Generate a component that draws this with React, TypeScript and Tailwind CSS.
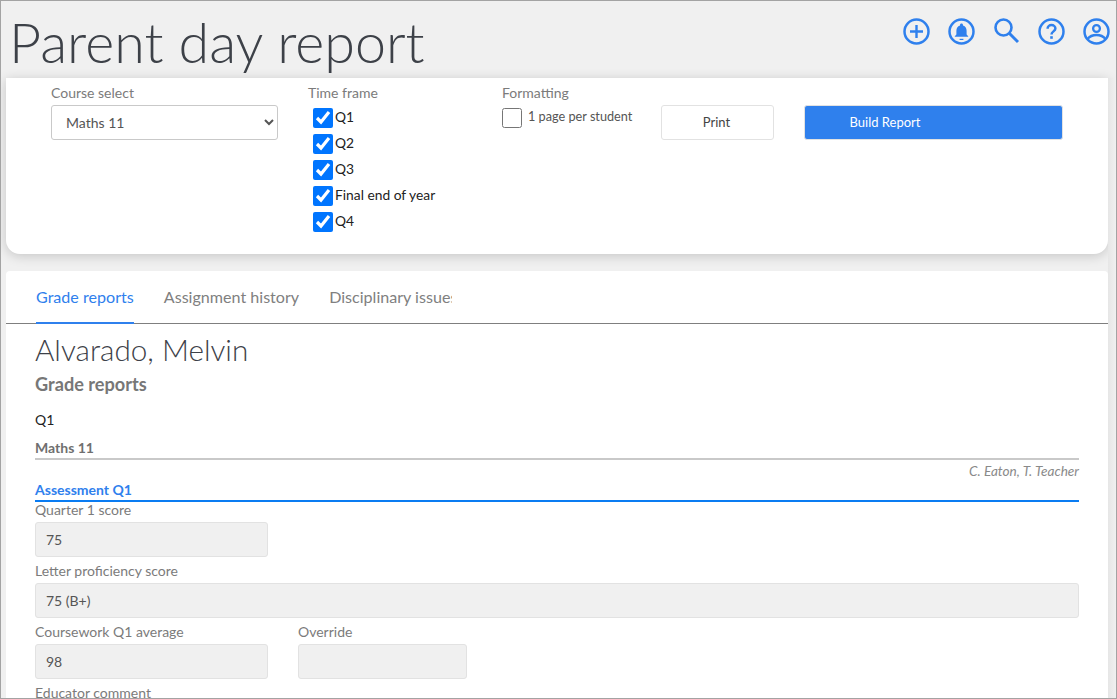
const quarters = ["Q1", "Q2", "Q3", "Final end of year", "Q4"];

function ReadonlyField({ label, value, className }: { label: string; value?: string; className: string }) {
  return (
    <div className={className}>
      <div className="h-[21px] text-[14px] leading-[17px] text-[#7b7b7b]">{label}</div>
      <div className="flex h-[35px] items-center rounded-[3px] border border-[#e2e2e2] bg-[#f0f0f0] pb-[1px] pl-[10px] text-[14px] text-[#555]">
        {value}
      </div>
    </div>
  );
}

function HeaderIcons() {
  return (
    <div className="absolute top-[17px] left-[902px] flex gap-[18px]">
      <svg width="27" height="27" viewBox="0 0 27 27" fill="none" stroke="#2f80ed" strokeWidth="2.5">
        <circle cx="13.5" cy="13.5" r="12" />
        <path d="M13.5 7v13M7 13.5h13" strokeWidth="2.4" />
      </svg>
      <svg width="27" height="27" viewBox="0 0 27 27" fill="none" stroke="#2f80ed" strokeWidth="2.5">
        <circle cx="13.5" cy="13.5" r="12" />
        <path
          d="M13.5 5.6c-.9 0-1.5.6-1.5 1.5v.5c-2.5.7-3.6 2.8-3.6 5.2v3.7l-1.6 1.7v.6h13.400v-.6l-1.6-1.700v-3.700c0-2.400-1.100-4.500-3.600-5.200v-.5c0-.9-.6-1.500-1.500-1.500z"
          fill="#2f80ed"
          stroke="none"
        />
        <path d="M11.6 21.4h3.8" strokeWidth="1.2" />
      </svg>
      <svg width="27" height="27" viewBox="0 0 27 27" fill="none" stroke="#2f80ed" strokeWidth="2.6" className="-mt-[1px]">
        <circle cx="10.5" cy="10.5" r="8" />
        <path d="M16.5 16.5l8.5 8.500" strokeWidth="3" />
      </svg>
      <svg width="27" height="27" viewBox="0 0 27 27" fill="none" stroke="#2f80ed" strokeWidth="2.5">
        <circle cx="13.5" cy="13.5" r="12" />
        <path d="M9.6 10.8c0-2.200 1.700-3.700 3.900-3.700s3.900 1.500 3.900 3.500c0 2.600-3.900 3-3.900 5.800" />
        <path d="M13.5 18.2v2.6" strokeWidth="2.6" />
      </svg>
      <svg width="27" height="27" viewBox="0 0 27 27" fill="none" stroke="#2f80ed" strokeWidth="2.5">
        <circle cx="13.5" cy="13.5" r="12" />
        <circle cx="13.5" cy="10.5" r="3.4" strokeWidth="2.3" />
        <path d="M4.5 21c2.200-2.800 5.400-4 9-4s6.800 1.200 9 4" strokeWidth="2.4" />
      </svg>
    </div>
  );
}

export default function App() {
  return (
    <div className="relative h-[699px] w-[1117px] overflow-hidden border border-[#a3a3a3] bg-[#f0f0f0] font-[family-name:Lato,sans-serif]">
      <header className="relative h-[77px]">
        <h1 className="absolute top-[5px] left-[8px] text-[55.6px] leading-[72px] font-light text-[#3d4148]">Parent day report</h1>
        <HeaderIcons />
      </header>

      <section className="relative mr-[8px] ml-[5px] h-[176px] rounded-b-[14px] bg-white shadow-[0_2px_12px_rgba(0,0,0,0.18)]">
        <div className="absolute top-[6px] left-[45px] w-[227px]">
          <div className="text-[14px] leading-[17px] text-[#7b7b7b]">Course select</div>
          <select className="mt-[4px] h-[35px] w-full rounded-[3px] border border-[#c9c9c9] bg-white pl-[10px] text-[14px] text-[#555]">
            <option>Maths 11</option>
          </select>
        </div>

        <div className="absolute top-[6px] left-[302px]">
          <div className="text-[14px] leading-[17px] text-[#7b7b7b]">Time frame</div>
          <div className="mt-[7px] ml-[5px] flex flex-col gap-[6px]">
            {quarters.map((q) => (
              <label key={q} className="flex h-[20px] items-center gap-[2px] text-[13.8px] leading-[18px] text-[#222]">
                <input type="checkbox" defaultChecked className="h-[20px] w-[20px]" />
                <span className="-mt-[2px]">{q}</span>
              </label>
            ))}
          </div>
        </div>

        <div className="absolute top-[6px] left-[496px]">
          <div className="text-[14px] leading-[17px] text-[#7b7b7b]">Formatting</div>
          <label className="mt-[7px] flex h-[20px] items-center gap-[6px] text-[12.7px] text-[#555]">
            <input type="checkbox" className="h-[20px] w-[20px]" />
            <span className="-mt-[2px]">1 page per student</span>
          </label>
        </div>

        <button className="absolute top-[27px] left-[655px] h-[35px] w-[113px] rounded-[3px] border border-[#e2e2e2] bg-white pr-[2px] text-[13px] text-[#444]">
          Print
        </button>
        <button className="absolute top-[27px] left-[798px] h-[35px] w-[259px] rounded-[3px] border border-[#e2e2e2] bg-[#2f80ed] pr-[97px] text-[13px] text-white">
          Build Report
        </button>
      </section>

      <main className="relative mt-[17px] mr-[8px] ml-[5px] h-[440px] overflow-hidden rounded-t-[4px] bg-white">
        <nav className="flex h-[53px] border-b border-[#7f7f7f] pl-[30px] text-[16.1px]">
          <div className="h-[53px] border-b-2 border-[#2f80ed] pt-[14px] leading-[23px] text-[#2f80ed]">Grade reports</div>
          <div className="ml-[30px] pt-[14px] leading-[23px] text-[#808080]">Assignment history</div>
          <div className="ml-[30px] w-[123px] overflow-hidden pt-[14px] leading-[23px] whitespace-nowrap text-[#808080]">Disciplinary issues</div>
        </nav>

        <div className="px-[29px]">
          <h2 className="mt-[7px] text-[29.7px] leading-[38px] font-light text-[#3d4148]">Alvarado, Melvin</h2>
          <h3 className="mt-[4px] text-[18.15px] leading-[22px] font-bold text-[#777]">Grade reports</h3>
          <div className="mt-[15px] text-[14px] leading-[20px] text-[#222]">Q1</div>
          <div className="mt-[8px] h-[22px] border-b-2 border-[#c9c9c9] text-[14px] leading-[19px] font-bold text-[#6f6f6f]">Maths 11</div>
          <div className="h-[22px] pt-[1px] text-right text-[13.6px] leading-[20px] text-[#8a8a8a] italic">C. Eaton, T. Teacher</div>
          <div className="h-[20px] border-b-2 border-[#0a7cf2] text-[14px] leading-[15px] font-bold text-[#2f80ed]">Assessment Q1</div>

          <ReadonlyField label="Quarter 1 score" value="75" className="-mt-[1px] w-[233px]" />
          <ReadonlyField label="Letter proficiency score" value="75 (B+)" className="mt-[5px] w-full" />
          <div className="mt-[5px] flex gap-[30px]">
            <ReadonlyField label="Coursework Q1 average" value="98" className="w-[233px]" />
            <ReadonlyField label="Override" className="w-[169px]" />
          </div>
          <div className="mt-[5px] text-[14px] leading-[17px] text-[#7b7b7b]">Educator comment</div>
        </div>
      </main>

      <div className="absolute top-[77px] right-0 bottom-0 w-[8px] bg-gradient-to-r from-[#e6e6e6] to-[#f0f0f0]" />
    </div>
  );
}
